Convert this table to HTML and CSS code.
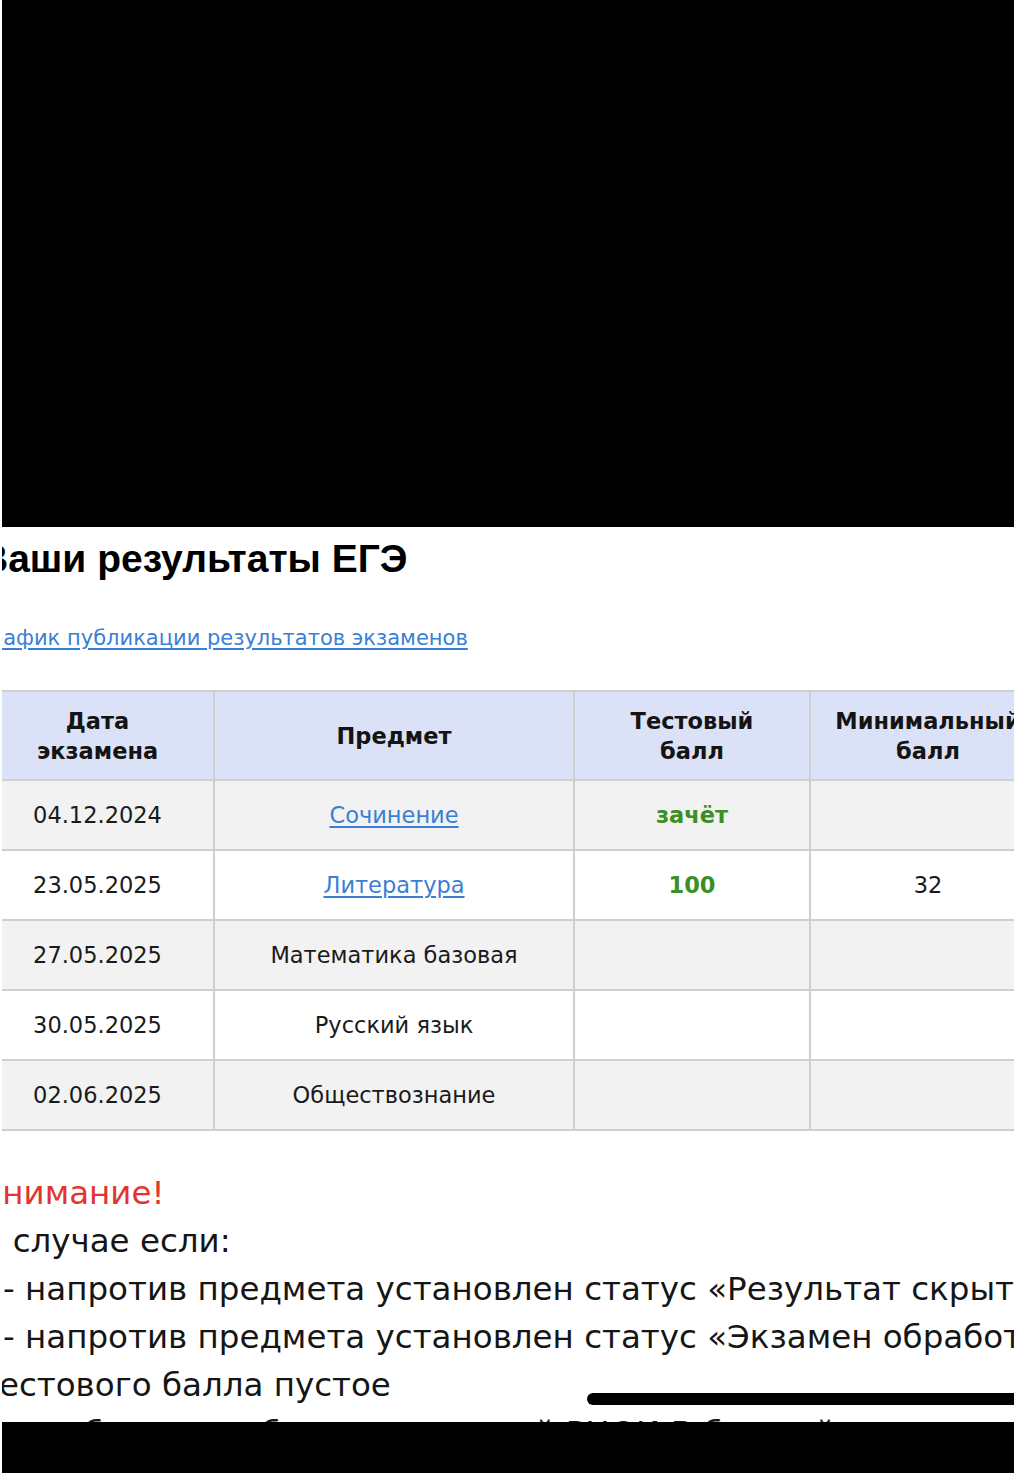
FILE: index.html
```html
<!DOCTYPE html>
<html lang="ru">
<head>
<meta charset="utf-8">
<title>Ваши результаты ЕГЭ</title>
<link rel="stylesheet" href="styles.css">
</head>
<body>
<div class="viewport">
  <div class="top-cover"></div>
  <div class="content">
    <h1 class="title">Ваши результаты ЕГЭ</h1>
    <a class="schedule-link" href="#">График публикации результатов экзаменов</a>
    <table class="results">
      <thead>
        <tr>
          <th class="c-date">Дата<br>экзамена</th>
          <th class="c-subj">Предмет</th>
          <th class="c-score">Тестовый<br>балл</th>
          <th class="c-min">Минимальный<br>балл</th>
          <th class="c-extra">Статус</th>
        </tr>
      </thead>
      <tbody>
        <tr class="alt">
          <td>04.12.2024</td>
          <td><a class="subj-link" href="#">Сочинение</a></td>
          <td class="pass">зачёт</td>
          <td></td>
          <td></td>
        </tr>
        <tr>
          <td>23.05.2025</td>
          <td><a class="subj-link" href="#">Литература</a></td>
          <td class="pass">100</td>
          <td>32</td>
          <td></td>
        </tr>
        <tr class="alt">
          <td>27.05.2025</td>
          <td>Математика базовая</td>
          <td></td>
          <td></td>
          <td></td>
        </tr>
        <tr>
          <td>30.05.2025</td>
          <td>Русский язык</td>
          <td></td>
          <td></td>
          <td></td>
        </tr>
        <tr class="alt">
          <td>02.06.2025</td>
          <td>Обществознание</td>
          <td></td>
          <td></td>
          <td></td>
        </tr>
      </tbody>
    </table>
    <div class="notice">
      <p class="notice-title">Внимание!</p>
      <p>В случае если:</p>
      <p class="dash">- напротив предмета установлен статус «Результат скрыт» или</p>
      <p class="dash">- напротив предмета установлен статус «Экзамен обработан», а поле</p>
      <p>тестового балла пустое</p>
      <p>— необходимо обратиться в свой РЦОИ В ближайшее время</p>
    </div>
  </div>
  <div class="scroll-bar"></div>
  <div class="bottom-cover"></div>
</div>
</body>
</html>
```
FILE: styles.css
```css
html, body {
  margin: 0;
  padding: 0;
  background: #fff;
}
body {
  width: 1014px;
  height: 1473px;
  overflow: hidden;
  position: relative;
}
.viewport {
  margin-left: 2px;
  width: 1012px;
  height: 1473px;
  overflow: hidden;
  position: relative;
}
.top-cover {
  height: 527px;
  background: #000;
}
.content {
  margin-left: -22px;
  width: 1400px;
}
.title {
  margin: 9px 0 0 0;
  font-family: "Liberation Sans", Arial, sans-serif;
  font-weight: bold;
  font-size: 39px;
  line-height: 46px;
  color: #000;
}
.schedule-link {
  display: block;
  margin-top: 41px;
  text-indent: -3px;
  font-family: "DejaVu Sans", Verdana, sans-serif;
  font-size: 21px;
  line-height: 30px;
  color: #3b7fd4;
  text-decoration: underline;
  text-underline-offset: 3px;
}
.results {
  margin-top: 37px;
  border-collapse: collapse;
  font-family: "DejaVu Sans", Verdana, sans-serif;
  font-size: 22.5px;
  color: #1a1a1a;
  table-layout: fixed;
}
.results th,
.results td {
  border: 2px solid #cfcfd2;
  text-align: center;
  vertical-align: middle;
  padding: 0;
}
.results th {
  background: #dbe1f6;
  font-weight: bold;
  line-height: 30px;
  height: 87px;
  color: #141414;
}
.results td {
  height: 68px;
  line-height: 30px;
}
.results tr.alt td {
  background: #f2f2f2;
}
.c-date { width: 231px; }
.c-subj { width: 358px; }
.c-score { width: 234px; }
.c-min { width: 234px; }
.c-extra { width: 234px; }
.subj-link {
  color: #3b7fd4;
  text-decoration: underline;
  text-underline-offset: 3px;
}
.pass {
  color: #3a8f25;
  font-weight: bold;
}
.notice {
  margin-top: 38px;
  font-family: "DejaVu Sans", Verdana, sans-serif;
  font-size: 32.5px;
  line-height: 48px;
  color: #151515;
  white-space: nowrap;
}
.notice p {
  margin: 0;
}
.notice-title {
  color: #e3342f;
}
.notice .dash {
  padding-left: 23px;
}
.scroll-bar {
  position: absolute;
  left: 585px;
  top: 1393px;
  width: 460px;
  height: 12px;
  border-radius: 6px;
  background: #000;
}
.bottom-cover {
  position: absolute;
  left: 0;
  right: 0;
  top: 1422px;
  bottom: 0;
  background: #000;
}
```
